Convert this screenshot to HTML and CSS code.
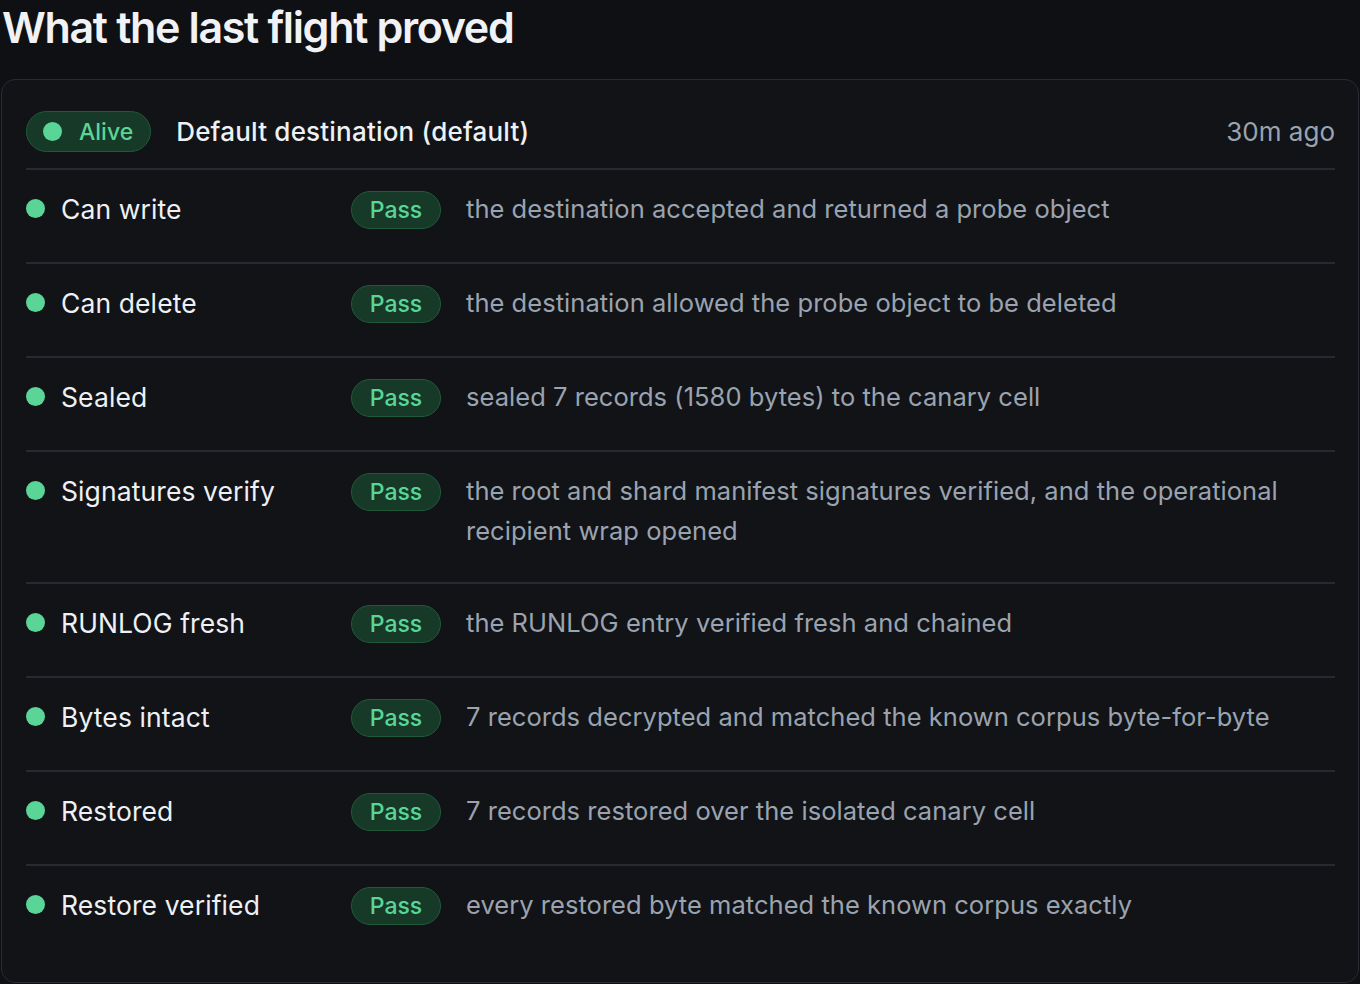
FILE: index.html
```html
<!DOCTYPE html>
<html lang="en">
<head>
<meta charset="utf-8">
<title>What the last flight proved</title>
<link rel="stylesheet" href="styles.css">
</head>
<body>
<section class="section">
  <h2 class="title">What the last flight proved</h2>
  <div class="card">
    <div class="card-head">
      <span class="status"><span class="status-dot"></span>Alive</span>
      <span class="dest">Default destination (default)</span>
      <span class="ago">30m ago</span>
    </div>
    <ul class="checks">
      <li class="check"><div class="label"><span class="dot"></span>Can write</div><span class="pass">Pass</span><p class="desc">the destination accepted and returned a probe object</p></li>
      <li class="check"><div class="label"><span class="dot"></span>Can delete</div><span class="pass">Pass</span><p class="desc">the destination allowed the probe object to be deleted</p></li>
      <li class="check"><div class="label"><span class="dot"></span>Sealed</div><span class="pass">Pass</span><p class="desc">sealed 7 records (1580 bytes) to the canary cell</p></li>
      <li class="check"><div class="label"><span class="dot"></span>Signatures verify</div><span class="pass">Pass</span><p class="desc">the root and shard manifest signatures verified, and the operational recipient wrap opened</p></li>
      <li class="check"><div class="label"><span class="dot"></span>RUNLOG fresh</div><span class="pass">Pass</span><p class="desc">the RUNLOG entry verified fresh and chained</p></li>
      <li class="check"><div class="label"><span class="dot"></span>Bytes intact</div><span class="pass">Pass</span><p class="desc">7 records decrypted and matched the known corpus byte-for-byte</p></li>
      <li class="check"><div class="label"><span class="dot"></span>Restored</div><span class="pass">Pass</span><p class="desc">7 records restored over the isolated canary cell</p></li>
      <li class="check"><div class="label"><span class="dot"></span>Restore verified</div><span class="pass">Pass</span><p class="desc">every restored byte matched the known corpus exactly</p></li>
    </ul>
  </div>
</section>
</body>
</html>
```
FILE: styles.css
```css
* { box-sizing: border-box; }
html, body {
  margin: 0;
  background: #0e1014;
  font-family: Inter, "Noto Sans", sans-serif;
  color: #eef0f3;
}
.section {
  padding: 0 1px;
}
.title {
  margin: 0;
  padding: 0 0 0 1px;
  font-size: 43px;
  line-height: 54px;
  font-weight: 600;
  letter-spacing: -1.35px;
  color: #f0f2f5;
}
.card {
  margin-top: 25px;
  border: 1.5px solid #272b33;
  border-radius: 14px;
  background: #111317;
  padding: 31px 23px 23px 24px;
  min-height: 904px;
}
.card-head {
  display: flex;
  align-items: center;
  padding-bottom: 16px;
  border-bottom: 2px solid #262a31;
}
.status {
  display: inline-flex;
  align-items: center;
  gap: 17px;
  height: 41px;
  padding: 0 17px 0 16px;
  border-radius: 21px;
  background: #163a27;
  border: 1.5px solid #1f5b3a;
  color: #5ad597;
  font-size: 23px;
  font-weight: 500;
}
.status-dot {
  width: 19px;
  height: 19px;
  border-radius: 50%;
  background: #5ad597;
}
.dest {
  margin-left: 25px;
  font-size: 26px;
  font-weight: 500;
  color: #eef0f3;
  letter-spacing: 0.2px;
}
.ago {
  margin-left: auto;
  font-size: 26px;
  color: #9aa3af;
}
.checks {
  list-style: none;
  margin: 0;
  padding: 0;
}
.check {
  display: flex;
  align-items: flex-start;
  padding: 19px 0 31px;
  border-bottom: 2px solid #262a31;
}
.check:last-child {
  border-bottom: 0;
}
.label {
  width: 325px;
  flex: none;
  display: flex;
  align-items: center;
  height: 42px;
  padding-bottom: 3px;
  font-size: 26.5px;
  color: #eef0f3;
  letter-spacing: 0.1px;
}
.dot {
  width: 19px;
  height: 19px;
  border-radius: 50%;
  background: #5ad597;
  margin-right: 16px;
}
.pass {
  flex: none;
  display: inline-flex;
  align-items: center;
  justify-content: center;
  width: 90px;
  height: 38px;
  margin-top: 2px;
  border-radius: 19px;
  background: #163a27;
  border: 1.5px solid #1f5b3a;
  color: #5ad597;
  font-size: 23px;
  font-weight: 500;
}
.desc {
  margin: 0 0 0 25px;
  font-size: 25.5px;
  line-height: 40px;
  color: #9aa3af;
  letter-spacing: 0.04px;
}
```
